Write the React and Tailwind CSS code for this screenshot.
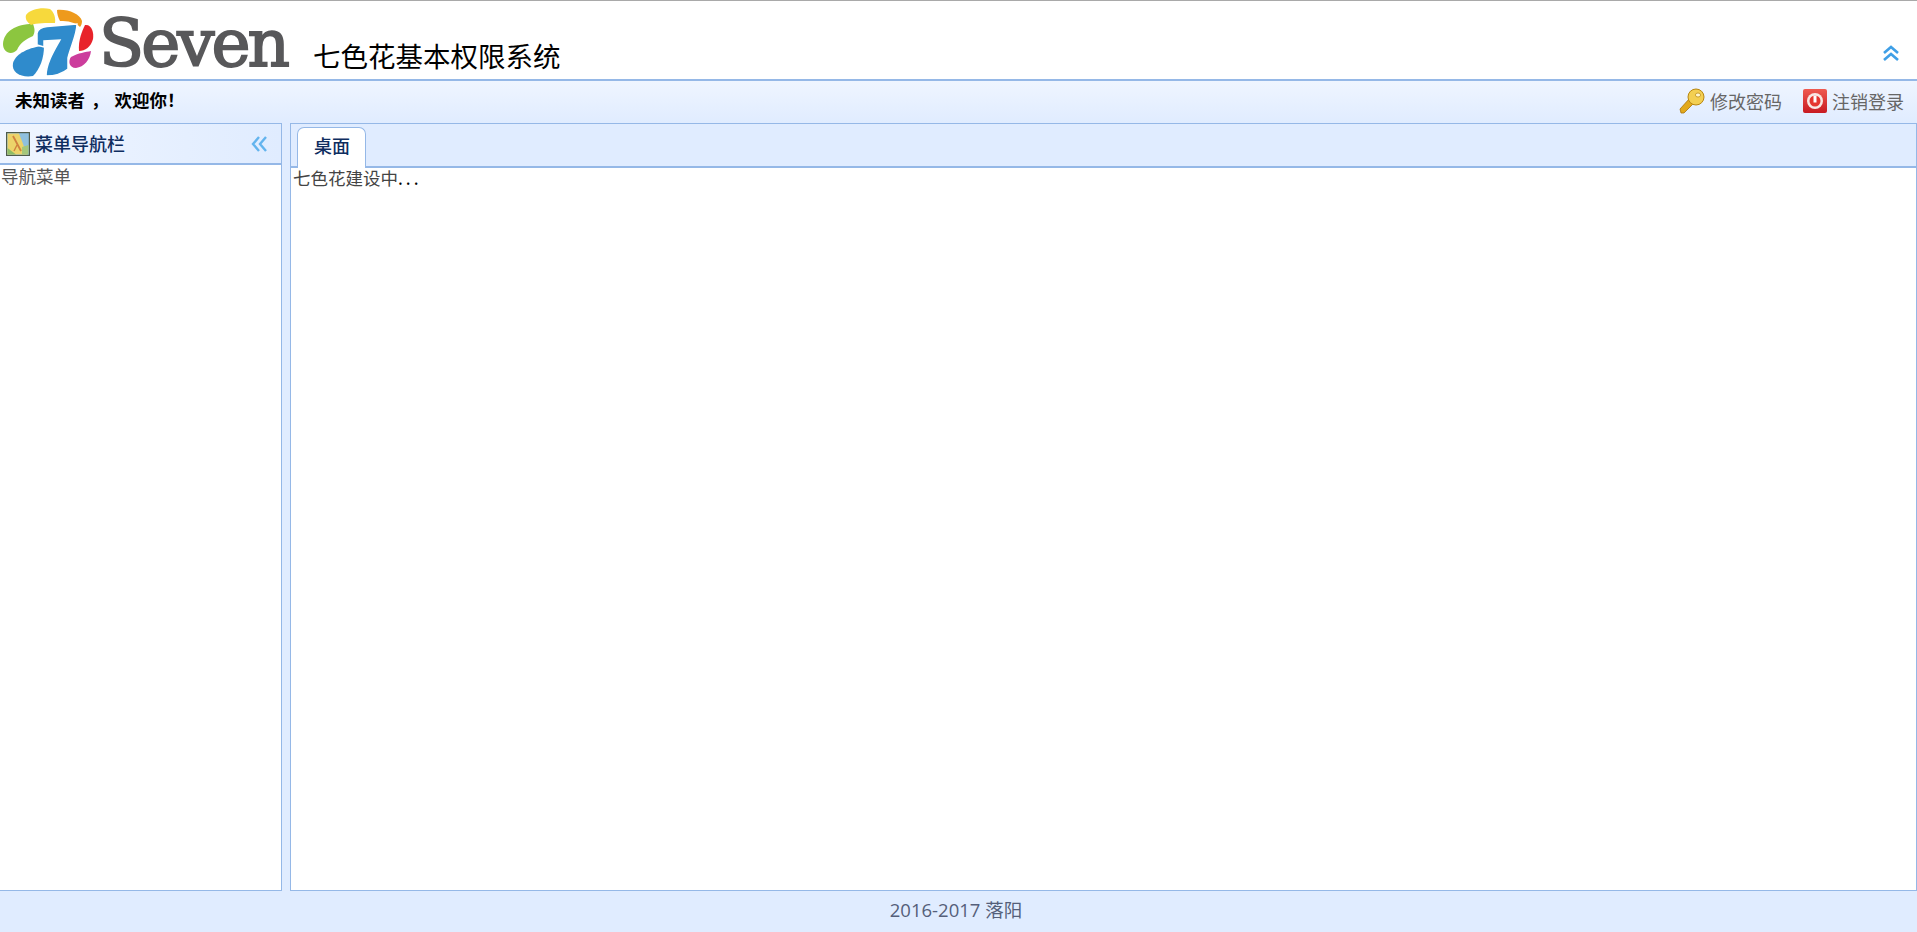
import React from "react";

const CJK = "font-['SimSun','Noto_Sans_CJK_SC',sans-serif]";

const Logo = () => (
  <svg width="98" height="80" viewBox="0 0 98 80" className="shrink-0">
    <path d="M3 43C4 30 16 23 33 23C35 28 35 31 33 35C26 38 20 42 17 49C11 55 3 51 3 43Z" fill="#8cc63f" />
    <path d="M26 14C30 8 42 6 50 8C54 11 56 17 55 22C46 22 37 22 31 24C27 21 25 18 26 14Z" fill="#f7d93c" />
    <path d="M57 9C68 8 80 13 82 20C82 23 81 25 80 26C75 21 68 20 60 20C58 16 57 13 57 9Z" fill="#ee9a1c" />
    <path d="M85 24C92 23 94 32 93 38C91 46 85 50 79 50C78 40 82 30 85 24Z" fill="#e8232a" />
    <path d="M71 56C78 52 86 51 91 50C90 59 84 66 76 67C69 67 68 60 71 56Z" fill="#cc3d9c" />
    <path d="M13 62C16 52 30 46 44 45C44 57 40 68 33 75C22 77 11 72 13 62Z" fill="#2f8bcc" />
    <path d="M37 44L37 32C38 27 42 26 47 25.500L77 23C77 34 70 47 68 57L68 68C62 73 54 75 46 75C46 62 55 48 60 39L44 40L44 46Z" fill="#2f8bcc" stroke="#fff" strokeWidth="1.500" />
  </svg>
);

const KeyIcon = () => (
  <svg width="26" height="26" viewBox="0 0 26 26" className="shrink-0">
    <path d="M1 21L11 10L16 14L5 25L2 25Z" fill="#e2a91c" stroke="#a8740c" strokeWidth="0.800" />
    <circle cx="17" cy="9" r="8" fill="#f3cf52" stroke="#b8860f" strokeWidth="1" />
    <ellipse cx="19" cy="7" rx="2.600" ry="2" fill="#fff6cf" stroke="#b8860f" strokeWidth="0.700" />
  </svg>
);

const PowerIcon = () => (
  <svg width="24" height="24" viewBox="0 0 24 24" className="shrink-0">
    <defs>
      <linearGradient id="pw" x1="0" y1="0" x2="0" y2="1">
        <stop offset="0" stopColor="#ef5a50" />
        <stop offset="1" stopColor="#c81a22" />
      </linearGradient>
    </defs>
    <rect width="24" height="24" rx="2" fill="url(#pw)" />
    <circle cx="12" cy="12" r="8" fill="#f8e8e4" />
    <circle cx="12" cy="12" r="5.500" fill="#e5362f" />
    <rect x="10.500" y="6.500" width="3" height="7" fill="#fff" />
  </svg>
);

const MapIcon = () => (
  <svg width="24" height="24" viewBox="0 0 24 24" className="shrink-0">
    <rect x="0.500" y="0.500" width="23" height="23" fill="#8fc0de" stroke="#4f5c4c" strokeWidth="1.400" />
    <path d="M1.500 1.500H13L21 22.500H1.500Z" fill="#ecd36a" />
    <path d="M1.500 16L10 22.500H1.500Z" fill="#8ebd66" />
    <path d="M16 15L22.500 13V22.500H16Z" fill="#a5c77b" />
    <path d="M7 4L15 19" stroke="#d0813f" strokeWidth="1.800" fill="none" />
    <path d="M11 13L8 19" stroke="#d0813f" strokeWidth="1.400" fill="none" />
  </svg>
);

const App = () => {
  return (
    <div className={`h-screen flex flex-col overflow-hidden bg-[#E0ECFF] ${CJK}`}>
      {/* Top banner */}
      <header className="h-[81px] shrink-0 flex bg-white border-t border-t-[#a9a9a9] border-b-2 border-b-[#95B8E7] pr-[17px]">
        <Logo />
        <div className="w-[197px] shrink-0 font-['DejaVu_Serif',serif] text-[66px] leading-[80px] tracking-[-3px] text-[#58585a] [-webkit-text-stroke:1.800px_#58585a] pt-[3px] pl-[1px]">
          Seven
        </div>
        <div className="ml-[18px] pt-[35px] text-[27.5px] leading-[38px] text-black whitespace-nowrap">
          七色花基本权限系统
        </div>
        <div className="ml-auto pt-[44px]">
          <svg width="18" height="16" viewBox="0 0 18 16" fill="none" stroke="#3f9fe6" strokeWidth="2.600">
            <path d="M2 8L9 2L16 8" />
            <path d="M2 15L9 9L16 15" />
          </svg>
        </div>
      </header>

      {/* User bar */}
      <div className="h-[42px] shrink-0 flex items-center justify-between pl-[15px] pr-[13px] bg-gradient-to-b from-[#EFF5FF] to-[#E0ECFF]">
        <div className="text-[17.5px] font-bold text-black -mt-[3px] whitespace-pre [word-spacing:2px]">未知读者 ， 欢迎你！</div>
        <div className="flex items-center text-[18px] text-[#666] -mt-[2px]">
          <KeyIcon />
          <span className="ml-[5px]">修改密码</span>
          <span className="ml-[21px]"><PowerIcon /></span>
          <span className="ml-[5px]">注销登录</span>
        </div>
      </div>

      <main className="flex-1 min-h-0 flex gap-[8px]">
        {/* Left menu panel */}
        <aside className="w-[282px] shrink-0 flex flex-col border border-[#95B8E7] border-l-0 bg-white">
          <div className="h-[41px] shrink-0 flex items-center justify-between pl-[6px] pr-[14px] bg-gradient-to-r from-[#EFF5FF] to-[#E0ECFF] border-b-2 border-b-[#95B8E7]">
            <div className="flex items-center gap-[5px] text-[18px] font-medium text-[#0E2D5F]">
              <MapIcon />
              <span>菜单导航栏</span>
            </div>
            <svg width="16" height="16" viewBox="0 0 16 16" fill="none" stroke="#63b4ee" strokeWidth="2.400">
              <path d="M8 1L2 8L8 15" />
              <path d="M15 1L9 8L15 15" />
            </svg>
          </div>
          <div className="pl-[1px] text-[17.5px] leading-[21px] text-[#555]">导航菜单</div>
        </aside>

        {/* Tab panel */}
        <section className="flex-1 min-w-0 flex flex-col border border-[#95B8E7] bg-white">
          <div className="h-[44px] shrink-0 flex items-end pl-[6px] bg-[#E0ECFF] border-b-2 border-b-[#95B8E7]">
            <div className="w-[69px] h-[41px] -mb-[2px] pb-[5px] pl-[1px] flex items-center justify-center bg-white border border-[#95B8E7] border-b-0 rounded-t-[7px] text-[18px] font-medium text-[#0E2D5F]">
              桌面
            </div>
          </div>
          <div className="pl-[2px] text-[17.5px] leading-[19px] text-[#444]">
            七色花建设中<span className="tracking-[3px] text-black">...</span>
          </div>
        </section>
      </main>

      <footer className="h-[41px] shrink-0 pb-[3px] pr-[5px] flex items-center justify-center bg-[#E0ECFF] text-[#555f7a]">
        <span className="font-['Open_Sans','Noto_Sans_CJK_SC',sans-serif] text-[18.5px]">2016-2017 落阳</span>
      </footer>
    </div>
  );
};

export default App;
